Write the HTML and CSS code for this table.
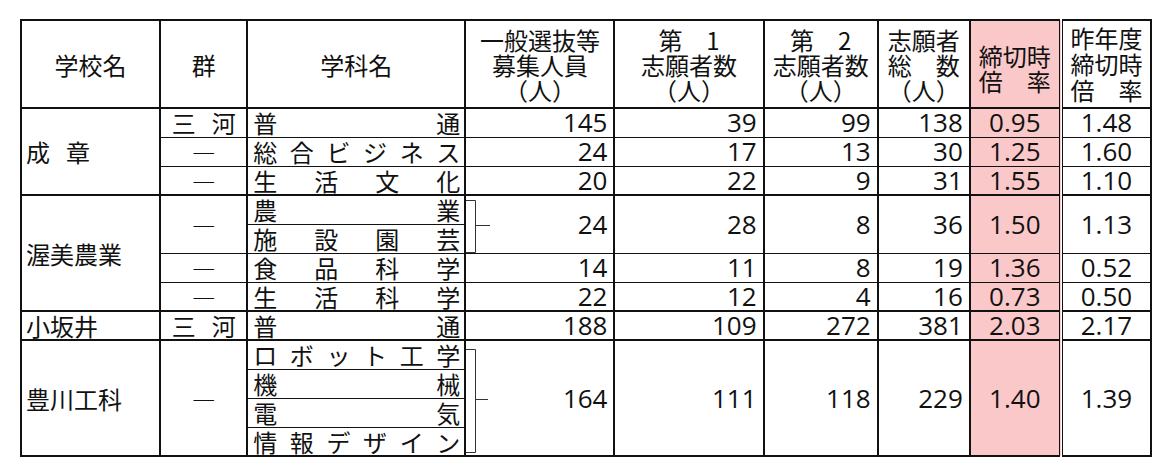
FILE: index.html
```html
<!DOCTYPE html>
<html lang="ja">
<head>
<meta charset="utf-8">
<title>志願者数</title>
<link rel="stylesheet" href="styles.css">
</head>
<body>
<table class="tbl">
  <colgroup>
    <col class="c-school"><col class="c-group"><col class="c-subj"><col class="c-cap"><col class="c-n1"><col class="c-n2"><col class="c-tot"><col class="c-rate"><col class="c-prev">
  </colgroup>
  <thead>
    <tr class="hd">
      <th>学校名</th>
      <th>群</th>
      <th>学科名</th>
      <th>一般選抜等<br>募集人員<br>（人）</th>
      <th>第　1<br>志願者数<br>（人）</th>
      <th>第　2<br>志願者数<br>（人）</th>
      <th>志願者<br>総　数<br>（人）</th>
      <th class="rate"><span class="shift">締切時<br>倍　率</span></th>
      <th class="prev">昨年度<br>締切時<br>倍　率</th>
    </tr>
  </thead>
  <tbody>
    <tr class="grp">
      <td class="school" rowspan="3"><span class="pair left"><span>成</span><span>章</span></span></td>
      <td class="gun"><span class="pair"><span>三</span><span>河</span></span></td>
      <td class="subj"><div class="dist"><span>普</span><span>通</span></div></td>
      <td class="num">145</td><td class="num">39</td><td class="num">99</td><td class="num">138</td>
      <td class="num rate">0.95</td><td class="num prev">1.48</td>
    </tr>
    <tr>
      <td class="gun">―</td>
      <td class="subj"><div class="dist"><span>総</span><span>合</span><span>ビ</span><span>ジ</span><span>ネ</span><span>ス</span></div></td>
      <td class="num">24</td><td class="num">17</td><td class="num">13</td><td class="num">30</td>
      <td class="num rate">1.25</td><td class="num prev">1.60</td>
    </tr>
    <tr>
      <td class="gun">―</td>
      <td class="subj"><div class="dist"><span>生</span><span>活</span><span>文</span><span>化</span></div></td>
      <td class="num">20</td><td class="num">22</td><td class="num">9</td><td class="num">31</td>
      <td class="num rate">1.55</td><td class="num prev">1.10</td>
    </tr>

    <tr class="grp">
      <td class="school" rowspan="4">渥美農業</td>
      <td class="gun" rowspan="2">―</td>
      <td class="subj"><div class="dist"><span>農</span><span>業</span></div></td>
      <td class="num brk" rowspan="2">24<svg class="bracket b1" width="26" height="54" viewBox="0 0 26 54"><path d="M0 0.5H9.5V52.5H0M9.5 25.5H24" fill="none" stroke="#333" stroke-width="1"/></svg></td>
      <td class="num" rowspan="2">28</td><td class="num" rowspan="2">8</td><td class="num" rowspan="2">36</td>
      <td class="num rate" rowspan="2">1.50</td><td class="num prev" rowspan="2">1.13</td>
    </tr>
    <tr>
      <td class="subj"><div class="dist"><span>施</span><span>設</span><span>園</span><span>芸</span></div></td>
    </tr>
    <tr>
      <td class="gun">―</td>
      <td class="subj"><div class="dist"><span>食</span><span>品</span><span>科</span><span>学</span></div></td>
      <td class="num">14</td><td class="num">11</td><td class="num">8</td><td class="num">19</td>
      <td class="num rate">1.36</td><td class="num prev">0.52</td>
    </tr>
    <tr>
      <td class="gun">―</td>
      <td class="subj"><div class="dist"><span>生</span><span>活</span><span>科</span><span>学</span></div></td>
      <td class="num">22</td><td class="num">12</td><td class="num">4</td><td class="num">16</td>
      <td class="num rate">0.73</td><td class="num prev">0.50</td>
    </tr>

    <tr class="grp">
      <td class="school">小坂井</td>
      <td class="gun"><span class="pair"><span>三</span><span>河</span></span></td>
      <td class="subj"><div class="dist"><span>普</span><span>通</span></div></td>
      <td class="num">188</td><td class="num">109</td><td class="num">272</td><td class="num">381</td>
      <td class="num rate">2.03</td><td class="num prev">2.17</td>
    </tr>

    <tr class="grp">
      <td class="school" rowspan="4">豊川工科</td>
      <td class="gun" rowspan="4">―</td>
      <td class="subj"><div class="dist"><span>ロ</span><span>ボ</span><span>ッ</span><span>ト</span><span>工</span><span>学</span></div></td>
      <td class="num brk" rowspan="4">164<svg class="bracket b2" width="26" height="104" viewBox="0 0 26 104"><path d="M0 0.5H9.5V103.5H0M9.5 50.5H22" fill="none" stroke="#333" stroke-width="1"/></svg></td>
      <td class="num" rowspan="4">111</td><td class="num" rowspan="4">118</td><td class="num" rowspan="4">229</td>
      <td class="num rate" rowspan="4">1.40</td><td class="num prev" rowspan="4">1.39</td>
    </tr>
    <tr>
      <td class="subj"><div class="dist"><span>機</span><span>械</span></div></td>
    </tr>
    <tr>
      <td class="subj"><div class="dist"><span>電</span><span>気</span></div></td>
    </tr>
    <tr>
      <td class="subj"><div class="dist"><span>情</span><span>報</span><span>デ</span><span>ザ</span><span>イ</span><span>ン</span></div></td>
    </tr>
  </tbody>
</table>
</body>
</html>
```

FILE: styles.css
```css
html, body {
  margin: 0;
  background: #ffffff;
}

body {
  padding: 19px 0 0 20px;
  font-family: "Noto Sans CJK JP", sans-serif;
  color: #111111;
}

.tbl {
  border-collapse: collapse;
  table-layout: fixed;
  width: 1132px;
  border: 2px solid #111111;
}

.c-school { width: 139px; }
.c-group  { width: 87px; }
.c-subj   { width: 218px; }
.c-cap    { width: 149px; }
.c-n1     { width: 149px; }
.c-n2     { width: 114px; }
.c-tot    { width: 92px; }
.c-rate   { width: 91px; }
.c-prev   { width: 90px; }

.tbl th,
.tbl td {
  border-left: 2px solid #111111;
  border-right: 2px solid #111111;
  border-top: 1px solid #111111;
  border-bottom: 1px solid #111111;
  padding: 0;
  vertical-align: middle;
  font-size: 24px;
  line-height: 27px;
  font-weight: 400;
}

.hd th {
  height: 86px;
  line-height: 25px;
  text-align: center;
  border-bottom: 2px solid #111111;
}

.hd .shift {
  display: inline-block;
  padding-top: 8px;
}

.hd .prev {
  line-height: 26px;
}

.tbl tbody tr {
  height: 29px;
}

.tbl tr.grp td {
  border-top: 2px solid #111111;
}

.school {
  text-align: left;
  padding-left: 4px !important;
}

.gun {
  text-align: center;
}

.pair {
  display: inline-flex;
  gap: 16px;
}

.pair.left {
  display: flex;
}

.subj .dist {
  display: flex;
  justify-content: space-between;
  padding: 0 4px 0 5px;
}

.num {
  font-family: "Open Sans", "Noto Sans", sans-serif;
  font-size: 26px !important;
  text-align: right;
  padding-right: 6px !important;
}

.rate {
  background: #fac8c8;
}

.num.rate,
.num.prev {
  text-align: center;
  padding-right: 0 !important;
}

.tbl .prev {
  border-left: 4px double #111111;
}

.brk {
  position: relative;
}

.bracket {
  position: absolute;
  left: 0;
  display: block;
}

.b1 { top: 4px; }
.b2 { top: 8px; }
```
